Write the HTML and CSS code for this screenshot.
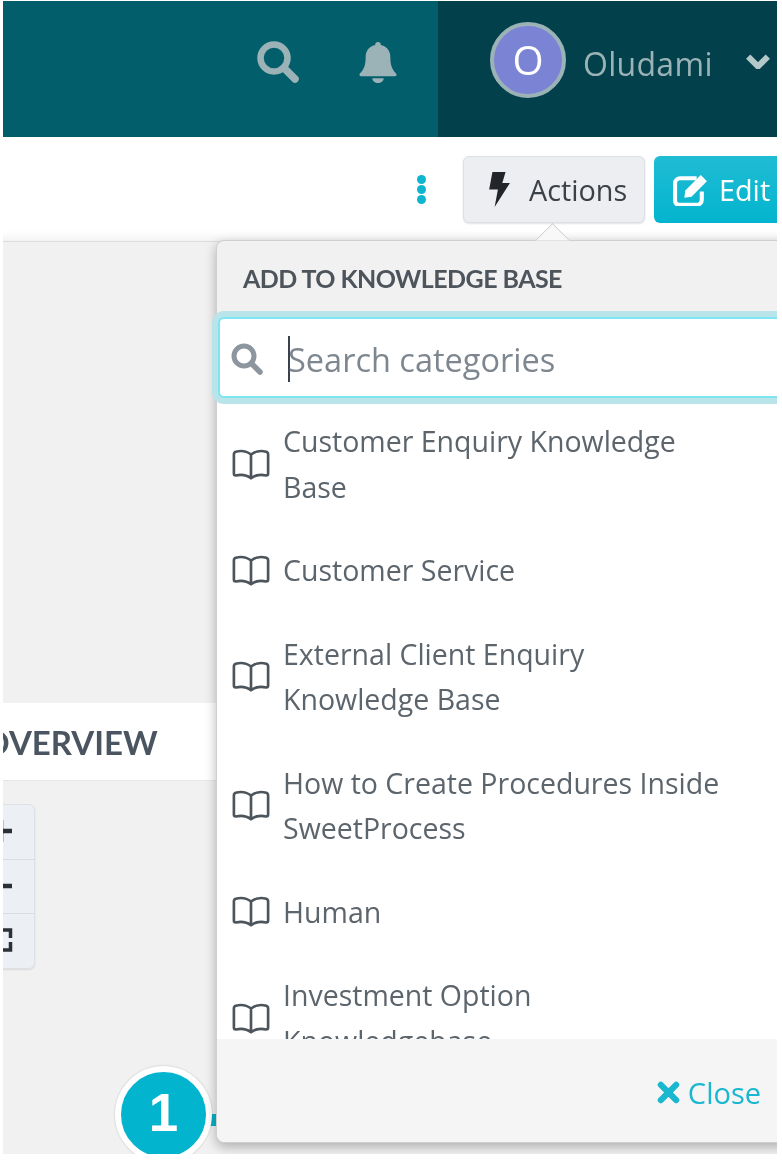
FILE: index.html
```html
<!DOCTYPE html>
<html lang="en">
<head>
<meta charset="utf-8">
<title>Add to knowledge base</title>
<link rel="stylesheet" href="styles.css">
</head>
<body>
<div class="shot">
  <header class="topbar">
    <div class="tools">
      <svg class="ico-search" viewBox="0 0 44 44"><circle cx="18" cy="18" r="13.5" fill="none" stroke="currentColor" stroke-width="6.5"/><path d="M28 28l11 11" stroke="currentColor" stroke-width="7.5" stroke-linecap="round"/></svg>
      <svg class="ico-bell" viewBox="0 0 40 44"><path d="M20 1c-2 0-3 1.300-3 3.200C10 5.600 7 11 7 17c0 9-2 13-6 17-1 1-.5 3 1 3h36c1.500 0 2-2 1-3-4-4-6-8-6-17 0-6-3-11.400-10-12.800C23 2.300 22 1 20 1z" fill="currentColor"/><path d="M14 39h12c0 3-3 5-6 5s-6-2-6-5z" fill="currentColor"/></svg>
    </div>
    <div class="user">
      <div class="avatar">O</div>
      <span class="user-name">Oludami</span>
      <svg class="ico-chevron" viewBox="1 2 22 13"><path d="M3 4l9 9 9-9" fill="none" stroke="currentColor" stroke-width="5.500"/></svg>
    </div>
  </header>

  <div class="toolbar">
    <div class="kebab"><i></i><i></i><i></i></div>
    <button class="btn btn-actions">
      <svg class="ico-bolt" viewBox="0 0 20 32"><path d="M4 0h12l-3 10h7L6 32l3-16H1z" fill="currentColor"/></svg>
      Actions
    </button>
    <button class="btn btn-edit">
      <svg class="ico-edit" viewBox="0 0 36 32"><path d="M23 5H7a5 5 0 0 0-5 5v17a4 4 0 0 0 4 4h17a5 5 0 0 0 5-5v-8" fill="none" stroke="currentColor" stroke-width="4"/><path d="M12 17L27 2l6 6-15 15-7 1z" fill="currentColor"/></svg>
      Edit
    </button>
  </div>

  <main class="content">
    <div class="overview">OVERVIEW</div>
    <div class="zoom-ctl">
      <div class="zoom-cell"><svg class="zoom-ico" viewBox="0 0 24 24"><path d="M0 12h22M11 1v22" fill="none" stroke="currentColor" stroke-width="4.500"/></svg></div>
      <div class="zoom-cell"><svg class="zoom-ico" viewBox="0 0 24 24"><path d="M0 12h22" fill="none" stroke="currentColor" stroke-width="4.500"/></svg></div>
      <div class="zoom-cell"><svg class="zoom-ico" viewBox="0 0 24 24"><path d="M13 2h7.500v8M13 22h7.500v-8" fill="none" stroke="currentColor" stroke-width="3.500"/></svg></div>
    </div>
    <div class="connector"></div>
    <div class="badge">1</div>
  </main>

  <aside class="popover">
    <div class="pop-arrow"></div>
    <div class="pop-title">ADD TO KNOWLEDGE BASE</div>
    <div class="pop-search">
      <svg class="ico-search-sm" viewBox="0 0 32 32"><circle cx="13" cy="13" r="10" fill="none" stroke="currentColor" stroke-width="5"/><path d="M20.500 20.500l8.500 8.500" stroke="currentColor" stroke-width="5.500" stroke-linecap="round"/></svg>
      <span class="caret"></span>
      <span class="placeholder">Search categories</span>
    </div>
    <ul class="pop-list">
      <li class="pop-item">
        <svg class="ico-book" viewBox="0 0 40 32"><path d="M20 5C15 1 8 1 4 2Q2 2.500 2 5V25Q2 27 4 27C9 26 15 26 20 30C25 26 31 26 36 27Q38 27 38 25V5Q38 2.500 36 2C32 1 25 1 20 5ZM20 5V30" fill="none" stroke="currentColor" stroke-width="2.800" stroke-linejoin="round"/></svg>
        <span>Customer Enquiry Knowledge Base</span>
      </li>
      <li class="pop-item">
        <svg class="ico-book" viewBox="0 0 40 32"><path d="M20 5C15 1 8 1 4 2Q2 2.500 2 5V25Q2 27 4 27C9 26 15 26 20 30C25 26 31 26 36 27Q38 27 38 25V5Q38 2.500 36 2C32 1 25 1 20 5ZM20 5V30" fill="none" stroke="currentColor" stroke-width="2.800" stroke-linejoin="round"/></svg>
        <span>Customer Service</span>
      </li>
      <li class="pop-item">
        <svg class="ico-book" viewBox="0 0 40 32"><path d="M20 5C15 1 8 1 4 2Q2 2.500 2 5V25Q2 27 4 27C9 26 15 26 20 30C25 26 31 26 36 27Q38 27 38 25V5Q38 2.500 36 2C32 1 25 1 20 5ZM20 5V30" fill="none" stroke="currentColor" stroke-width="2.800" stroke-linejoin="round"/></svg>
        <span>External Client Enquiry<br>Knowledge Base</span>
      </li>
      <li class="pop-item">
        <svg class="ico-book" viewBox="0 0 40 32"><path d="M20 5C15 1 8 1 4 2Q2 2.500 2 5V25Q2 27 4 27C9 26 15 26 20 30C25 26 31 26 36 27Q38 27 38 25V5Q38 2.500 36 2C32 1 25 1 20 5ZM20 5V30" fill="none" stroke="currentColor" stroke-width="2.800" stroke-linejoin="round"/></svg>
        <span>How to Create Procedures Inside SweetProcess</span>
      </li>
      <li class="pop-item">
        <svg class="ico-book" viewBox="0 0 40 32"><path d="M20 5C15 1 8 1 4 2Q2 2.500 2 5V25Q2 27 4 27C9 26 15 26 20 30C25 26 31 26 36 27Q38 27 38 25V5Q38 2.500 36 2C32 1 25 1 20 5ZM20 5V30" fill="none" stroke="currentColor" stroke-width="2.800" stroke-linejoin="round"/></svg>
        <span>Human</span>
      </li>
      <li class="pop-item">
        <svg class="ico-book" viewBox="0 0 40 32"><path d="M20 5C15 1 8 1 4 2Q2 2.500 2 5V25Q2 27 4 27C9 26 15 26 20 30C25 26 31 26 36 27Q38 27 38 25V5Q38 2.500 36 2C32 1 25 1 20 5ZM20 5V30" fill="none" stroke="currentColor" stroke-width="2.800" stroke-linejoin="round"/></svg>
        <span>Investment Option Knowledgebase</span>
      </li>
    </ul>
    <div class="pop-footer">
      <svg class="ico-x" viewBox="0 0 24 24"><path d="M4 4l16 16M20 4L4 20" stroke="currentColor" stroke-width="6.500" stroke-linecap="round"/></svg>
      <span>Close</span>
    </div>
  </aside>
</div>
</body>
</html>
```

FILE: styles.css
```css
* { box-sizing: border-box; }
html, body { margin: 0; padding: 0; background: #fff; }
body { width: 782px; height: 1170px; overflow: hidden; font-family: "Open Sans", "Noto Sans", sans-serif; }
.shot { position: relative; width: 774px; height: 1153px; margin: 1px 0 0 3px; overflow: hidden; display: flex; flex-direction: column; background: #f1f1f1; filter: blur(.55px); }

.topbar { flex: 0 0 136px; display: flex; justify-content: flex-end; background: #025e6b; }
.tools { display: flex; align-items: center; gap: 59px; padding: 0 41px 15px 0; color: #9bb3b6; }
.ico-search { width: 44px; height: 44px; }
.ico-bell { width: 38px; height: 42px; }
.user { width: 339px; display: flex; align-items: center; background: #02414b; padding: 0 0 19px 52px; color: #9bb3b6; }
.avatar { flex: 0 0 76px; height: 76px; border-radius: 50%; border: 4px solid #9bb3b6; background: #7b83d4; color: #fff; display: flex; align-items: center; justify-content: center; font-size: 40px; }
.user-name { margin: 8px 0 0 17px; font-size: 32px; letter-spacing: .3px; }
.ico-chevron { flex: 0 0 24px; height: 15px; margin: 4px 0 0 33px; color: #b5c8ca; }

.toolbar { flex: 0 0 105px; display: flex; align-items: flex-start; justify-content: flex-end; background: #fff; padding-top: 19px; border-bottom: 1px solid #ddd; box-shadow: inset 0 -16px 12px -14px #ececec; }
.kebab { display: flex; flex-direction: column; gap: 1px; margin: 19px 37px 0 0; }
.kebab i { width: 9px; height: 9px; border-radius: 50%; background: #0db5ce; }
.btn { display: flex; align-items: center; height: 67px; font: 28.800px "Open Sans", sans-serif; border-radius: 6px; padding: 0; }
.btn-actions { width: 182px; margin-right: 9px; border: 1px solid #dcdfe3; background: #eceef1; color: #3c4148; padding-left: 24px; gap: 19px; box-shadow: 0 1px 2px rgba(0,0,0,.12); }
.ico-bolt { flex: 0 0 22px; height: 35px; color: #22262b; }
.btn-edit { width: 124px; margin-right: -1px; border: 0; background: linear-gradient(#20bcd4, #03b4ce); color: #fff; padding-left: 19px; gap: 9px; border-radius: 6px 0 0 6px; }
.ico-edit { flex: 0 0 37px; height: 33px; }

.content { flex: 1; position: relative; }
.overview { position: absolute; left: -20px; top: 461px; width: 244px; height: 78px; background: #fff; border-bottom: 1px solid #e6e6e6; padding: 17px 0 0 0; font: 700 33px/44px "Lato", sans-serif; color: #4b5561; }
.zoom-ctl { position: absolute; left: -10px; top: 562px; width: 42px; height: 165px; border: 1px solid #dde1e6; border-radius: 6px; background: #eceff3; display: flex; flex-direction: column; box-shadow: 0 1px 2px rgba(0,0,0,.1); }
.zoom-cell { flex: 1; display: flex; align-items: center; justify-content: flex-end; padding-right: 20px; border-bottom: 1px solid #d9dde2; color: #2b2f36; }
.zoom-cell:last-child { border-bottom: 0; }
.zoom-ico { flex: 0 0 24px; height: 24px; margin-top: -2px; }
.connector { position: absolute; left: 204px; top: 872px; width: 13px; height: 12px; background: #03b4ce; }
.badge { position: absolute; left: 112px; top: 824px; width: 97px; height: 97px; border-radius: 50%; background: #03b4ce; border: 6px solid #fff; color: #fff; font: 700 53px/82px "Liberation Sans", sans-serif; text-align: center; box-shadow: 0 0 2px rgba(0,0,0,.25); }

.popover { position: absolute; left: 213px; top: 239px; width: 570px; height: 903px; background: #f1f1f1; border: 1px solid #cfcfcf; border-radius: 8px 0 0 8px; box-shadow: 0 4px 12px rgba(0,0,0,.28); display: flex; flex-direction: column; }
.pop-arrow { position: absolute; left: 323px; top: -13px; width: 25px; height: 25px; background: #f8f8f8; border-left: 1px solid #cfcfcf; border-top: 1px solid #cfcfcf; transform: rotate(45deg); clip-path: polygon(0 0, 100% 0, 0 100%); }
.pop-title { flex: 0 0 76px; padding: 20px 0 0 26px; font: 700 25px/34px "Lato", sans-serif; letter-spacing: -.55px; color: #4d545c; position: relative; }
.pop-search { flex: 0 0 81px; margin-left: 1px; display: flex; align-items: center; background: #fff; border: 2px solid #7fe6f1; border-radius: 6px; box-shadow: 0 0 0 6px #b9e4ea; position: relative; z-index: 1; padding: 3px 0 0 11px; }
.ico-search-sm { flex: 0 0 32px; height: 32px; color: #8d959e; }
.caret { flex: 0 0 2px; height: 46px; background: #39424c; margin-left: 25px; }
.placeholder { font-size: 32.500px; color: #7e8790; margin-left: -2px; white-space: nowrap; }
.pop-list { list-style: none; margin: 0; padding: 2px 0 0; flex: 1; overflow: hidden; background: #fff; border-right: 7px solid #f5f5f5; }
.pop-item { display: flex; align-items: center; gap: 13px; padding: 19px 40px 19px 15px; font-size: 28.500px; line-height: 45.500px; color: #5c646c; }
.ico-book { flex: 0 0 38px; height: 32px; color: #4c545c; }
.pop-footer { flex: 0 0 103px; display: flex; align-items: center; justify-content: flex-end; gap: 8px; padding: 3px 24px 0 0; background: #f5f5f5; color: #19b7d0; font-size: 29px; border-radius: 0 0 0 8px; }
.ico-x { flex: 0 0 23px; height: 23px; }
```
